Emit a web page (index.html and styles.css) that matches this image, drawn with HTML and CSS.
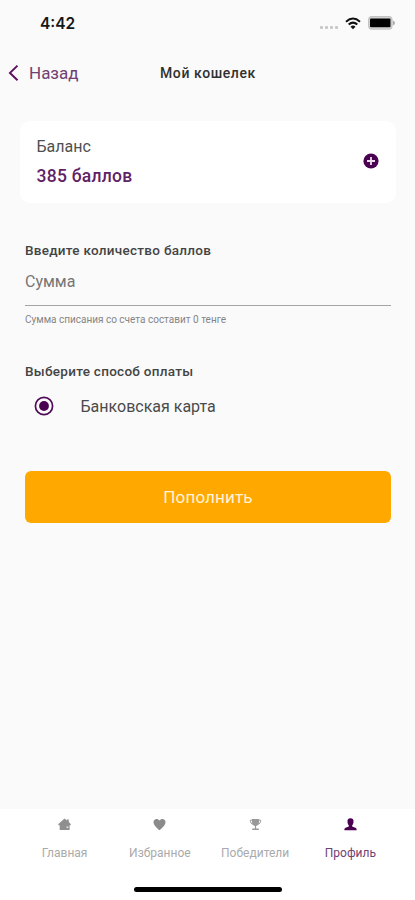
FILE: index.html
```html
<!DOCTYPE html>
<html lang="ru">
<head>
<meta charset="utf-8">
<title>Мой кошелек</title>
<link rel="stylesheet" href="styles.css">
</head>
<body>
<div class="screen">
  <div class="status">
    <span class="time">4:42</span>
    <div class="indicators">
      <svg class="signal" width="20" height="5" viewBox="0 0 20 5" fill="#c8c8c8"><rect x="1" y="1" width="3" height="3" rx="1"/><rect x="6" y="1" width="3" height="3" rx="1"/><rect x="11" y="1" width="3" height="3" rx="1"/><rect x="16" y="1" width="3" height="3" rx="1"/></svg>
      <svg class="wifi" width="16" height="13" viewBox="0 0 16 13" fill="none" stroke="#111" stroke-width="2"><path d="M1 4.700Q8-1.600 15 4.700M3.700 7.600Q8 3.600 12.300 7.600"/><path d="M5.500 9.700Q8 7.400 10.500 9.700L8 12.300Z" fill="#111" stroke="none"/></svg>
      <svg width="27" height="14" viewBox="0 0 27 14"><rect x=".7" y=".7" width="23.2" height="12.4" rx="3" fill="#d6d6d6" stroke="#c2c2c2" stroke-width="1.300"/><rect x="2" y="2.500" width="20.500" height="8.800" rx="1" fill="#000"/><path d="M24.800 4.500Q27 5.400 27 7T24.800 9.500Z" fill="#aaa"/></svg>
    </div>
  </div>
  <header class="header">
    <a class="back"><svg width="12" height="18" viewBox="0 0 12 18" fill="none" stroke="#5c1260" stroke-width="2"><path d="M9.500 1.600 2 8.900l7.500 7.300"/></svg><span>Назад</span></a>
    <h1 class="title">Мой кошелек</h1>
  </header>
  <section class="balance">
    <div class="balance-info">
      <span class="balance-label">Баланс</span>
      <strong class="balance-value">385 баллов</strong>
    </div>
    <svg width="16" height="16" viewBox="0 0 16 16"><circle cx="8" cy="8" r="7.600" fill="#4b0151"/><path d="M8 4v8M4 8h8" stroke="#eadfea" stroke-width="1.800"/></svg>
  </section>
  <main class="form">
    <h2 class="heading amount-title">Введите количество баллов</h2>
    <div class="field">Сумма</div>
    <p class="hint">Сумма списания со счета составит 0 тенге</p>
    <h2 class="heading pay-title">Выберите способ оплаты</h2>
    <label class="option">
      <svg width="20" height="20" viewBox="0 0 20 20"><circle cx="10" cy="10" r="8.600" fill="none" stroke="#500b58" stroke-width="1.700"/><circle cx="10" cy="10" r="4.900" fill="#4b0151"/></svg>
      <span>Банковская карта</span>
    </label>
    <button class="submit">Пополнить</button>
  </main>
  <nav class="tabs">
    <a class="tab"><svg width="13" height="13" viewBox="0 0 13 13" fill="#8f8f8f"><path d="M6.500.6 8.800 2.400V1.500h2v2.500L12.700 6v1.200H11.600v4.900H1.700V7.200H.4V6Z"/><path d="M8.600 8.400h1.700v1.700H8.600Z" fill="#e4e4e4"/></svg><span>Главная</span></a>
    <a class="tab"><svg width="13" height="13" viewBox="0 0 13 13" fill="#8b8b8b"><path d="M6.500 12.200C4 10 .5 7 .5 4.200.5 2.400 1.800 1.100 3.500 1.100c1.300 0 2.300.6 3 1.500.7-.9 1.700-1.500 3-1.500 1.700 0 3 1.300 3 3.100C12.500 7 9 10 6.500 12.200Z"/></svg><span>Избранное</span></a>
    <a class="tab"><svg width="13" height="13" viewBox="0 0 13 13"><path d="M3.500 2.200H1.300c0 2.400 1 3.800 3 4M9.500 2.200h2.200c0 2.400-1 3.800-3 4" fill="none" stroke="#999"/><path d="M3 .9h7v3c0 2.200-1.200 3.700-2.900 4.100v2.600h2.700v1.300H3.200v-1.300h2.700V8C4.200 7.600 3 6.100 3 3.900Z" fill="#999"/></svg><span>Победители</span></a>
    <a class="tab active"><svg width="13" height="13" viewBox="0 0 13 13" fill="#4b0151"><path d="M6.500.2C8.900.2 9.700 1.700 9.500 3.700 9.400 5.400 8.900 6.500 8.200 7.200v1.200c1.500.6 4 .9 4.400 2.500v1.400H.4v-1.400C.8 9.300 3.300 9 4.800 8.400V7.200C4.100 6.500 3.600 5.400 3.500 3.700 3.300 1.700 4.100.2 6.500.2Z"/></svg><span>Профиль</span></a>
  </nav>
  <div class="home"><div class="home-bar"></div></div>
</div>
</body>
</html>
```
FILE: styles.css
```css
* { box-sizing: border-box; }
body { margin: 0; background: #fafafa; font-family: Roboto, "Liberation Sans", sans-serif; color: #303030; }
h1, h2, p { margin: 0; }
.screen { width: 415px; height: 900px; display: flex; flex-direction: column; overflow: hidden; }
.status { height: 46px; padding: 0 20px 0 40px; display: flex; justify-content: space-between; align-items: center; }
.time { padding-top: 1px; font: 600 15.5px/20px Inter, sans-serif; color: #161616; }
.indicators { display: flex; align-items: center; }
.signal { margin: 8px 6px 0 0; }
.wifi { margin-right: 7px; }
.header { height: 54px; padding: 0 8px; display: grid; grid-template-columns: 152px 1fr; align-items: center; }
.back { display: flex; align-items: center; gap: 9px; color: #704172; font-size: 17px; line-height: 20px; }
.title { font-size: 14px; line-height: 20px; font-weight: 500; letter-spacing: .6px; color: #303030; }
.balance { height: 82px; margin: 21px 19px 0 20px; padding: 0 17px 2px 16.5px; border-radius: 10px; background: #fff; display: flex; align-items: center; justify-content: space-between; }
.balance-info { display: flex; flex-direction: column; gap: 5px; }
.balance-label { font-size: 16px; line-height: 24px; color: #505050; }
.balance-value { font-size: 17.5px; line-height: 24px; font-weight: 500; letter-spacing: .25px; color: #5f2265; }
.form { flex: 1; padding: 0 24px 0 25px; display: flex; flex-direction: column; }
.heading { font-size: 13.5px; line-height: 20px; font-weight: 500; letter-spacing: .28px; color: #444; }
.amount-title { margin-top: 37px; }
.field { height: 46px; padding-top: 10px; border-bottom: 1px solid #a5a5a5; font-size: 16px; line-height: 24px; color: #757575; }
.hint { margin-top: 7px; font-size: 10px; line-height: 14px; color: #858585; }
.pay-title { margin-top: 34px; }
.option { height: 24px; margin-top: 13px; padding-left: 9px; display: flex; align-items: center; gap: 26.5px; font-size: 16px; color: #4a4a4a; }
.submit { height: 52px; margin-top: 53px; padding: 0; border: 0; border-radius: 6px; background: #ffa900; color: #fff3d8; font: 400 17px/24px Roboto, sans-serif; letter-spacing: .15px; }
.tabs { height: 62px; padding: 0 17px; display: grid; grid-template-columns: repeat(4, 1fr); background: #fff; }
.tab { display: flex; flex-direction: column; align-items: center; padding-top: 9px; gap: 13px; color: #aaa; font-size: 12px; line-height: 18px; white-space: nowrap; }
.active { color: #704172; }
.home { height: 29px; background: #fff; display: flex; justify-content: center; padding-top: 16px; }
.home-bar { width: 148px; height: 5px; border-radius: 3px; background: #000; }
```
